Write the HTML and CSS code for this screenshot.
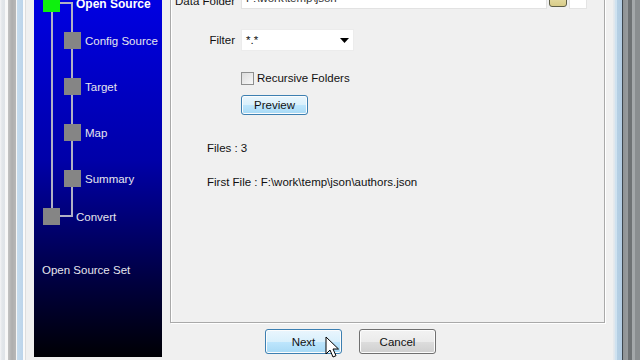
FILE: index.html
```html
<!DOCTYPE html>
<html>
<head>
    <meta charset="UTF-8">
    <title>Open Source</title>
    <link rel="stylesheet" href="styles.css">
</head>
<body>
    <div class="desk">
        <div class="frame-left"></div>

        <div class="window">
            <!-- Wizard steps -->
            <div class="sidebar">
                <div class="tree">
                    <div class="line line-a"></div>
                    <div class="line line-b"></div>
                    <div class="line line-top"></div>
                    <div class="line line-bottom"></div>

                    <div class="step top current"><span class="sq"></span><span>Open Source</span></div>
                    <div class="step child first"><span class="sq"></span><span>Config Source</span></div>
                    <div class="step child"><span class="sq"></span><span>Target</span></div>
                    <div class="step child"><span class="sq"></span><span>Map</span></div>
                    <div class="step child"><span class="sq"></span><span>Summary</span></div>
                    <div class="step top last"><span class="sq"></span><span>Convert</span></div>
                </div>
                <div class="step-title">Open Source Set</div>
            </div>

            <div class="main">
                <div class="box">
                    <div class="row folder-row">
                        <label class="lbl">Data Folder</label>
                        <div class="field">F:\work\temp\json</div>
                        <span class="browse"></span>
                        <span class="extra"></span>
                    </div>

                    <div class="row filter-row">
                        <label class="lbl">Filter</label>
                        <div class="combo">
                            <span>*.*</span>
                            <svg width="9" height="5" viewBox="0 0 9 5"><path d="M0 0h9L4.5 5z" fill="#000"/></svg>
                        </div>
                    </div>

                    <div class="row check-row">
                        <span class="lbl"></span>
                        <span class="checkbox"></span>
                        <span>Recursive Folders</span>
                    </div>

                    <div class="row preview-row">
                        <span class="lbl"></span>
                        <button class="btn hot small">Preview</button>
                    </div>

                    <div class="info files">Files : 3</div>
                    <div class="info first">First File : F:\work\temp\json\authors.json</div>
                </div>

                <div class="buttons">
                    <button class="btn hot">Next</button>
                    <button class="btn">Cancel</button>
                </div>
            </div>
        </div>

        <div class="frame-right"></div>

        <!-- mouse pointer -->
        <svg class="cursor" width="14" height="22" viewBox="0 0 14 22">
            <path d="M1 1v17l4-4 3 7 3-1.3-3-6.7h5.5z" fill="#fff" stroke="#000" stroke-width="1" stroke-linejoin="round"/>
        </svg>
    </div>
</body>
</html>
```

FILE: styles.css
```css
body {
    margin: 0;
    font-family: "Liberation Sans", Arial, sans-serif;
    font-size: 11.5px;
    color: #111;
    overflow: hidden;
}
.desk {
    position: relative;
    display: flex;
    width: 640px;
    height: 360px;
}
.frame-left {
    width: 26px;
    background: linear-gradient(to right,
        #f4f4f6 0, #e2e6ea 2px, #dfe3e8 5px, #f8f8f8 5px, #f8f8f8 8px,
        #c4c4c4 8px, #aeaeae 12px, #b8b8b8 16px, #f6f6f6 16px, #f6f6f6 17px,
        #c6dcee 17px, #bcd4ea 23px, #fafafa 23px, #fafafa 25px, #dedede 25px);
}
.frame-right {
    width: 27px;
    background: linear-gradient(to right,
        #e8eaec 0, #dde6ee 2px, #cfe2f0 2px, #cfe2f0 4px, #b6d0e4 4px, #b2cce2 9px,
        #3e474e 9px, #3e474e 10px, #8e9294 10px, #989c9e 15px, #6e7274 15px,
        #6e7274 19px, #a4a8aa 19px, #a4a8aa 22px, #8a8e90 22px);
}
.window {
    flex: 1;
    display: flex;
    background: #f0f0f0;
    padding-left: 8px;
}

/* sidebar */
.sidebar {
    width: 128px;
    height: 357px;
    background: linear-gradient(#0000e2 0%, #0000a8 45%, #00003c 80%, #000004 100%);
    color: #e6e6ee;
    overflow: hidden;
}
.tree {
    position: relative;
    margin-top: -5px;
}
.line {
    position: absolute;
    background: #b0b0c4;
}
.line-a { left: 17px; top: 17px; width: 2px; height: 196px; }
.line-b { left: 37px; top: 7px; width: 2px; height: 215px; }
.line-top { left: 26px; top: 7px; width: 12px; height: 2px; }
.line-bottom { left: 26px; top: 220px; width: 12px; height: 2px; }
.step {
    display: flex;
    align-items: center;
    height: 17px;
    white-space: nowrap;
}
.step .sq {
    position: relative;
    width: 17px;
    height: 17px;
    background: #858585;
    flex: none;
}
.step.top { padding-left: 9px; gap: 16px; }
.step.child { padding-left: 30px; gap: 4px; margin-top: 29px; }
.step.child.first { margin-top: 20px; }
.step.last { margin-top: 21px; }
.step.current .sq { background: #0ef00e; }
.step.current span:last-child {
    font-weight: bold;
    font-size: 12px;
    color: #fff;
}
.step-title {
    margin-top: 38px;
    padding-left: 8px;
    line-height: 14px;
}

/* main panel */
.main {
    flex: 1;
    display: flex;
    flex-direction: column;
    padding-left: 8px;
    padding-right: 8px;
}
.box {
    flex: 1;
    margin-top: -20px;
    padding: 6px 0 0 4px;
    border: 1px solid #a9a9a9;
    box-shadow: inset 1px 1px 0 #fff, 1px 1px 0 #fff;
}
.row {
    display: flex;
    align-items: center;
}
.lbl {
    width: 60px;
    margin-right: 6px;
    text-align: right;
    white-space: nowrap;
    flex: none;
}
.folder-row {
    height: 21px;
}
.folder-row .lbl {
    text-align: left;
    margin-top: 6px;
}
.field {
    width: 300px;
    height: 20px;
    line-height: 20px;
    padding-left: 4px;
    background: #fff;
    border: 1px solid #e2e2e2;
    color: #333;
}
.browse {
    width: 16px;
    height: 18px;
    margin-left: 2px;
    margin-top: -2px;
    border: 1px solid #5e5e46;
    border-radius: 3px;
    background: linear-gradient(#f4eec8, #d8cc88);
}
.extra {
    width: 16px;
    height: 20px;
    margin-left: 2px;
    background: #fff;
    border: 1px solid #e4e4e4;
}
.filter-row { margin-top: 21px; }
.combo {
    display: flex;
    align-items: center;
    justify-content: space-between;
    width: 103px;
    height: 20px;
    padding: 0 4px 0 4px;
    background: #fff;
    border: 1px solid #ececec;
}
.check-row { margin-top: 20px; height: 14px; }
.checkbox {
    width: 11px;
    height: 11px;
    margin-right: 3px;
    border: 1px solid #8e8f8f;
    background: linear-gradient(135deg, #dcdcdc, #f8f8f8);
}
.preview-row { margin-top: 10px; }
.info {
    margin-left: 32px;
    line-height: 14px;
}
.files { margin-top: 26px; }
.first { margin-top: 20px; }

/* buttons */
.btn {
    font-family: "Liberation Sans", Arial, sans-serif;
    font-size: 11.5px;
    color: #111;
    width: 77px;
    height: 25px;
    padding: 0;
    border: 1px solid #707070;
    border-radius: 3px;
    background: linear-gradient(#f2f2f2 0%, #ebebeb 50%, #dddddd 51%, #cfcfcf 100%);
    box-shadow: inset 0 0 0 1px #fcfcfc;
}
.btn.hot {
    border-color: #3c7fb1;
    background: linear-gradient(#eaf6fd 0%, #d9f0fc 50%, #bee6fd 51%, #a7d9f5 100%);
}
.btn.small {
    width: 67px;
    height: 20px;
}
.buttons {
    display: flex;
    gap: 17px;
    height: 25px;
    margin: 6px 0 6px 95px;
}
.cursor {
    position: absolute;
    left: 325px;
    top: 336px;
}
```
